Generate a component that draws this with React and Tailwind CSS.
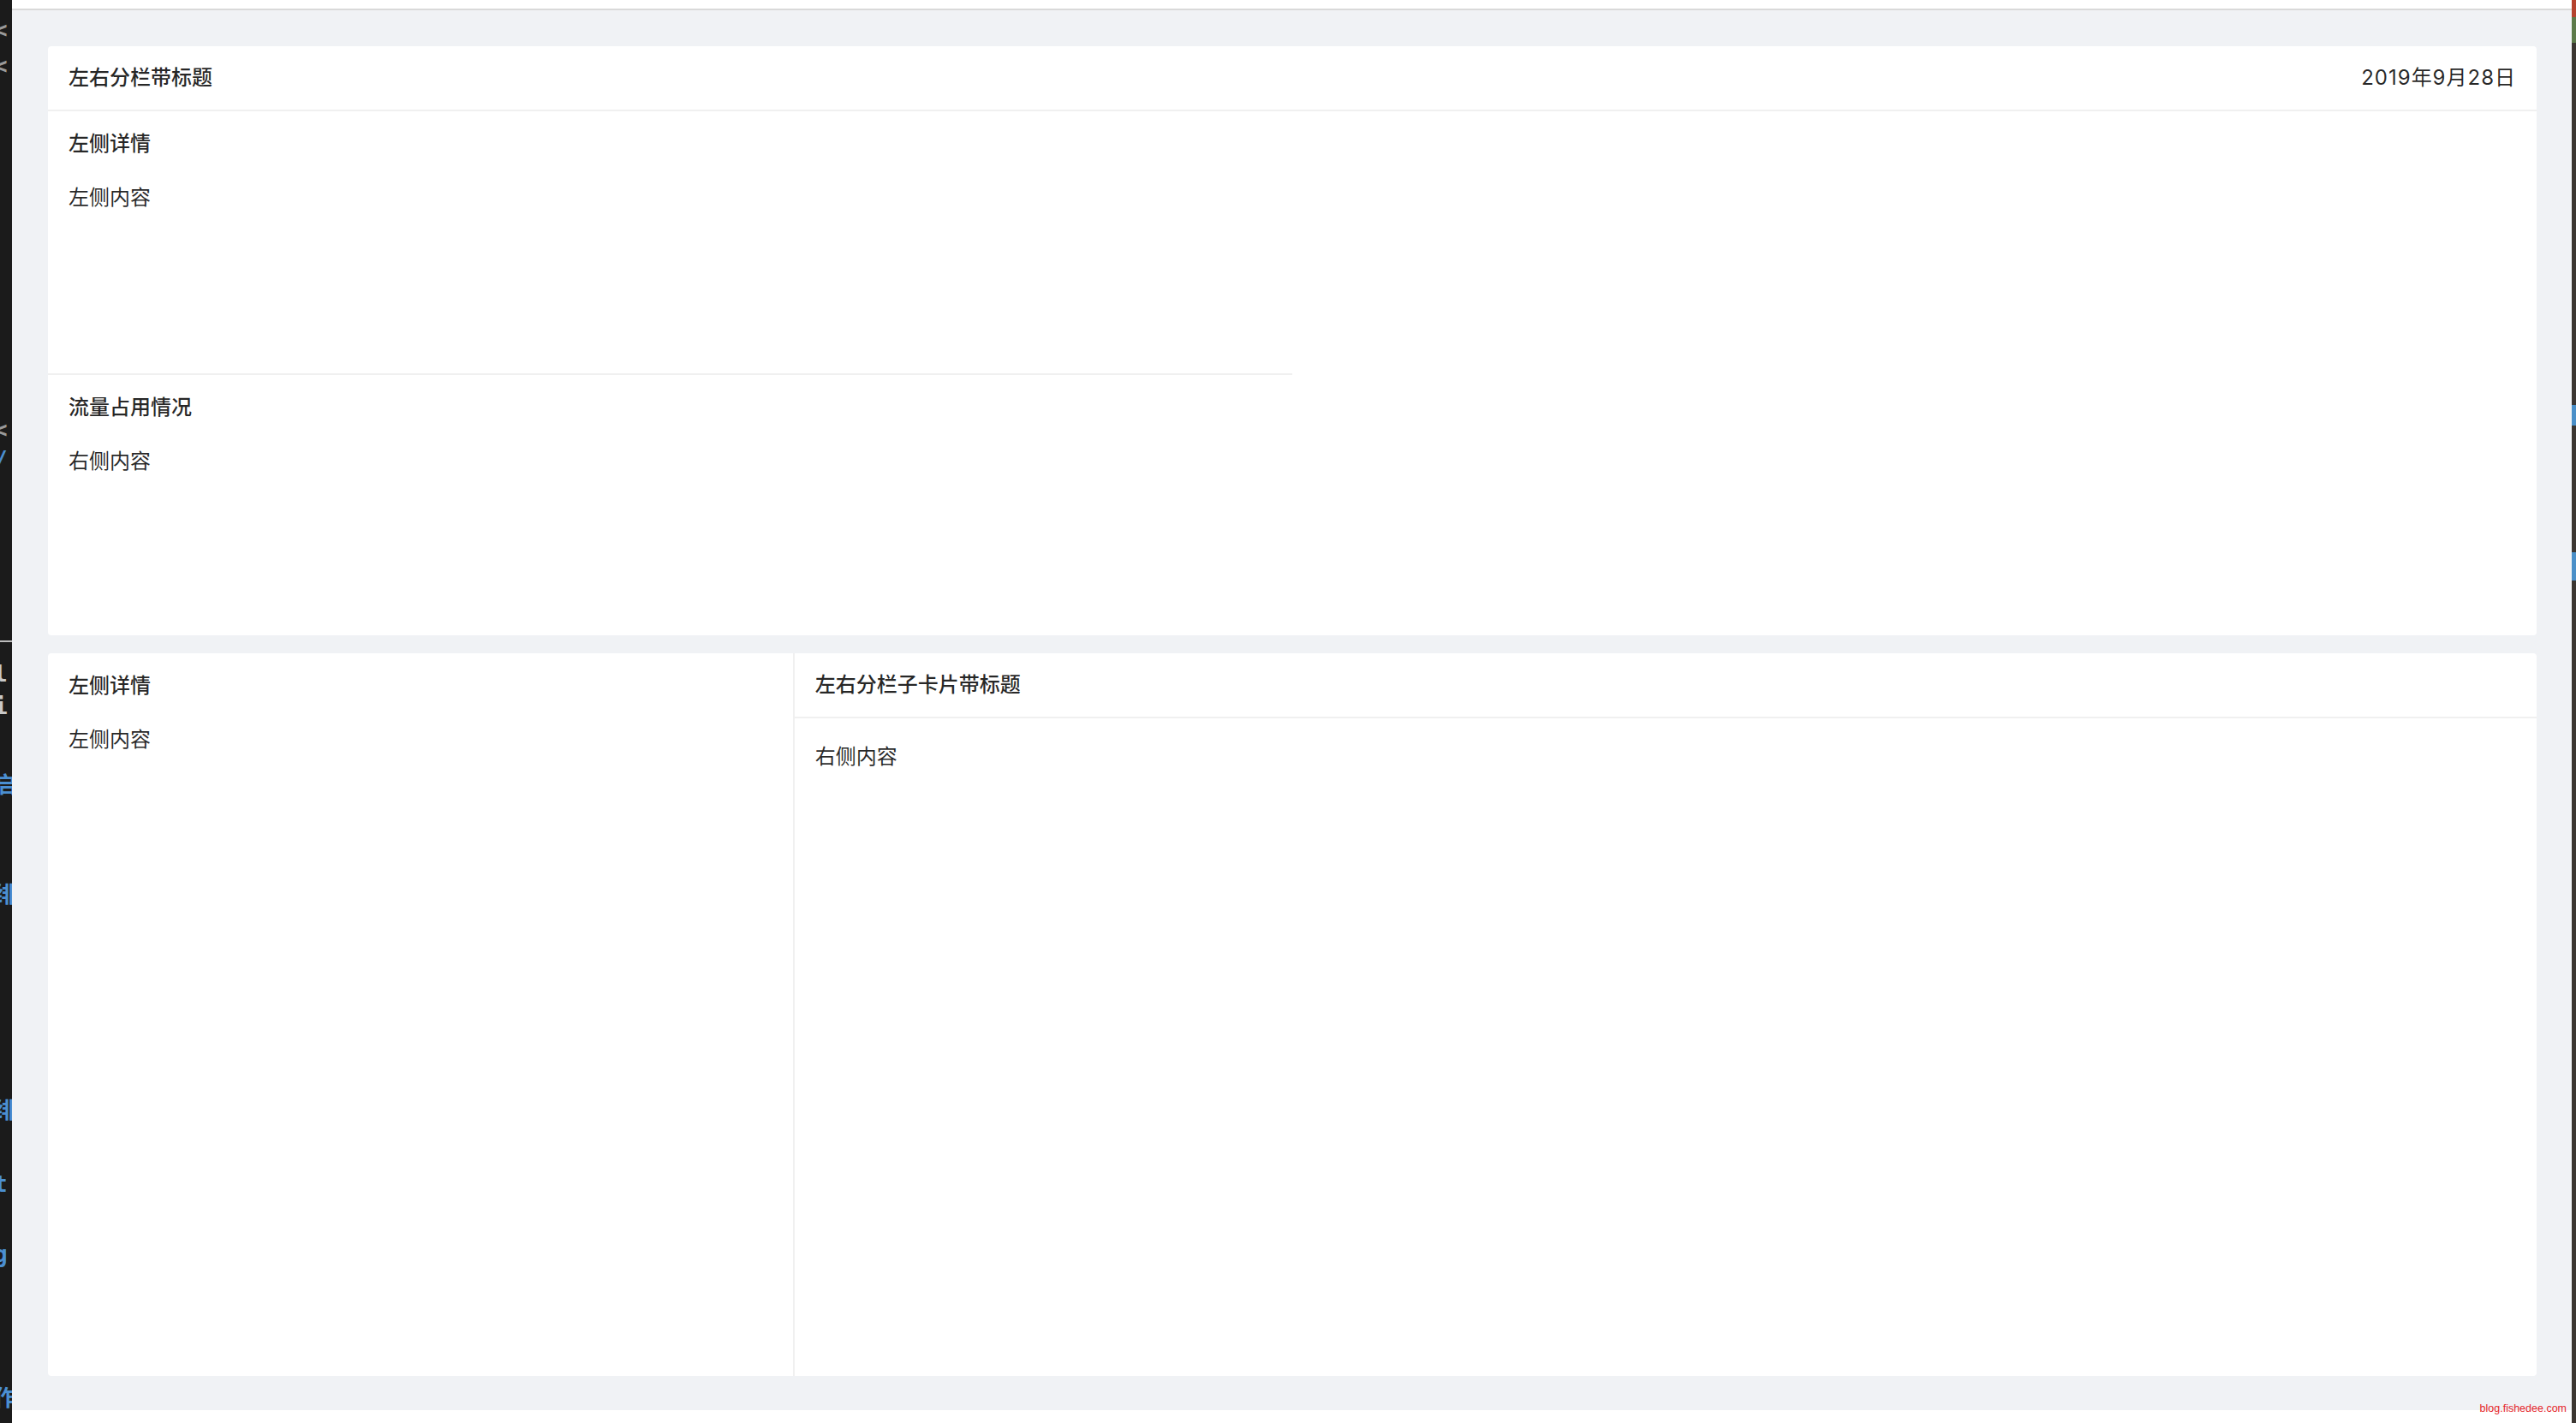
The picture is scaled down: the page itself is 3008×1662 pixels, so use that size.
const font = "font-[Inter,'Noto_Sans_CJK_SC',sans-serif]";

const leftBits = [
    { mt: 'mt-[20px]', text: '<', color: 'text-[#9a9a9a]' },
    { mt: 'mt-[12px]', text: '<', color: 'text-[#9a9a9a]' },
    { mt: 'mt-[395px]', text: '<', color: 'text-[#9a9a9a]' },
    { mt: 'mt-[5px]', text: '/', color: 'text-[#4b8fd1]' },
];

const leftBits2 = [
    { mt: 'mt-[22px]', text: 'l', color: 'text-[#c8c8c8]' },
    { mt: 'mt-[8px]', text: 'i', color: 'text-[#c8c8c8]' },
    { mt: 'mt-[62px]', text: '启', color: 'text-[#4b8fd1]' },
    { mt: 'mt-[98px]', text: '绯', color: 'text-[#4b8fd1]' },
    { mt: 'mt-[222px]', text: '绯', color: 'text-[#4b8fd1]' },
    { mt: 'mt-[56px]', text: 't', color: 'text-[#4b8fd1]' },
    { mt: 'mt-[52px]', text: 'g', color: 'text-[#4b8fd1]' },
    { mt: 'mt-[138px]', text: '作', color: 'text-[#4b8fd1]' },
];

function Bit({ bit }) {
    return (
        <div className={`${bit.mt} h-[30px] leading-[30px] text-[26px] font-bold -ml-[7px] whitespace-nowrap ${bit.color}`}>
            {bit.text}
        </div>
    );
}

function Section({ title, content, className }) {
    return (
        <div className={`px-6 pt-[20px] ${className}`}>
            <div className="text-[24px] leading-[36px] font-medium">{title}</div>
            <div className="mt-[27px] text-[24px] leading-[36px]">{content}</div>
        </div>
    );
}

export default function App() {
    return (
        <div className={`relative w-[3008px] h-[1662px] flex overflow-hidden text-[rgba(0,0,0,0.85)] ${font}`}>
            {/* editor behind the window */}
            <div className="w-[14px] shrink-0 bg-[#1b1b1b] overflow-hidden flex flex-col font-['DejaVu_Sans_Mono','Noto_Sans_CJK_SC',monospace]">
                {leftBits.map((b, i) => <Bit key={i} bit={b} />)}
                <div className="mt-[196px] h-[2px] bg-[#bdbdbd]" />
                {leftBits2.map((b, i) => <Bit key={i} bit={b} />)}
            </div>

            <div className="flex-1 flex flex-col min-w-0">
                <div className="h-[12px] shrink-0 bg-white border-b-2 border-[#d9d9d9]" />

                <div className="flex-1 bg-[#f0f2f5] pt-[42px] pl-[42px] pr-[41px] pb-[40px] flex flex-col">
                    {/* card 1 */}
                    <div className="h-[688px] shrink-0 bg-white rounded-[4px] flex flex-col">
                        <div className="h-[76px] shrink-0 px-6 flex items-center justify-between border-b-2 border-[#f0f0f0]">
                            <div className="text-[24px] font-medium">左右分栏带标题</div>
                            <div className="text-[24px] tracking-[1px]">2019年9月28日</div>
                        </div>
                        <div className="w-1/2 flex flex-col">
                            <Section title="左侧详情" content="左侧内容" className="h-[308px] border-b-2 border-[#f0f0f0]" />
                            <Section title="流量占用情况" content="右侧内容" className="h-[304px]" />
                        </div>
                    </div>

                    {/* card 2 */}
                    <div className="mt-[21px] flex-1 bg-white rounded-[4px] flex">
                        <div className="w-[30%] shrink-0 border-r-2 border-[#f0f0f0]">
                            <Section title="左侧详情" content="左侧内容" className="pt-[19px]" />
                        </div>
                        <div className="flex-1 flex flex-col">
                            <div className="h-[76px] shrink-0 px-6 flex items-center border-b-2 border-[#f0f0f0]">
                                <div className="text-[24px] font-medium">左右分栏子卡片带标题</div>
                            </div>
                            <div className="px-6 pt-[27px] text-[24px] leading-[36px]">右侧内容</div>
                        </div>
                    </div>
                </div>

                <div className="h-[15px] shrink-0 bg-white" />
            </div>

            {/* desktop behind the window */}
            <div className="w-[5px] shrink-0 bg-[#3b3631] flex flex-col">
                <div className="h-[20px] bg-[#b4432e]" />
                <div className="h-[30px] bg-[#5d7a4a]" />
                <div className="mt-[423px] h-[24px] bg-[#4a8fc8]" />
                <div className="mt-[148px] h-[33px] bg-[#4a8fc8]" />
            </div>

            <div className="absolute right-[11px] bottom-[9px] text-[12.5px] leading-[16px] text-[#e5262b] font-['Liberation_Sans',Arial,sans-serif]">
                blog.fishedee.com
            </div>
        </div>
    );
}
